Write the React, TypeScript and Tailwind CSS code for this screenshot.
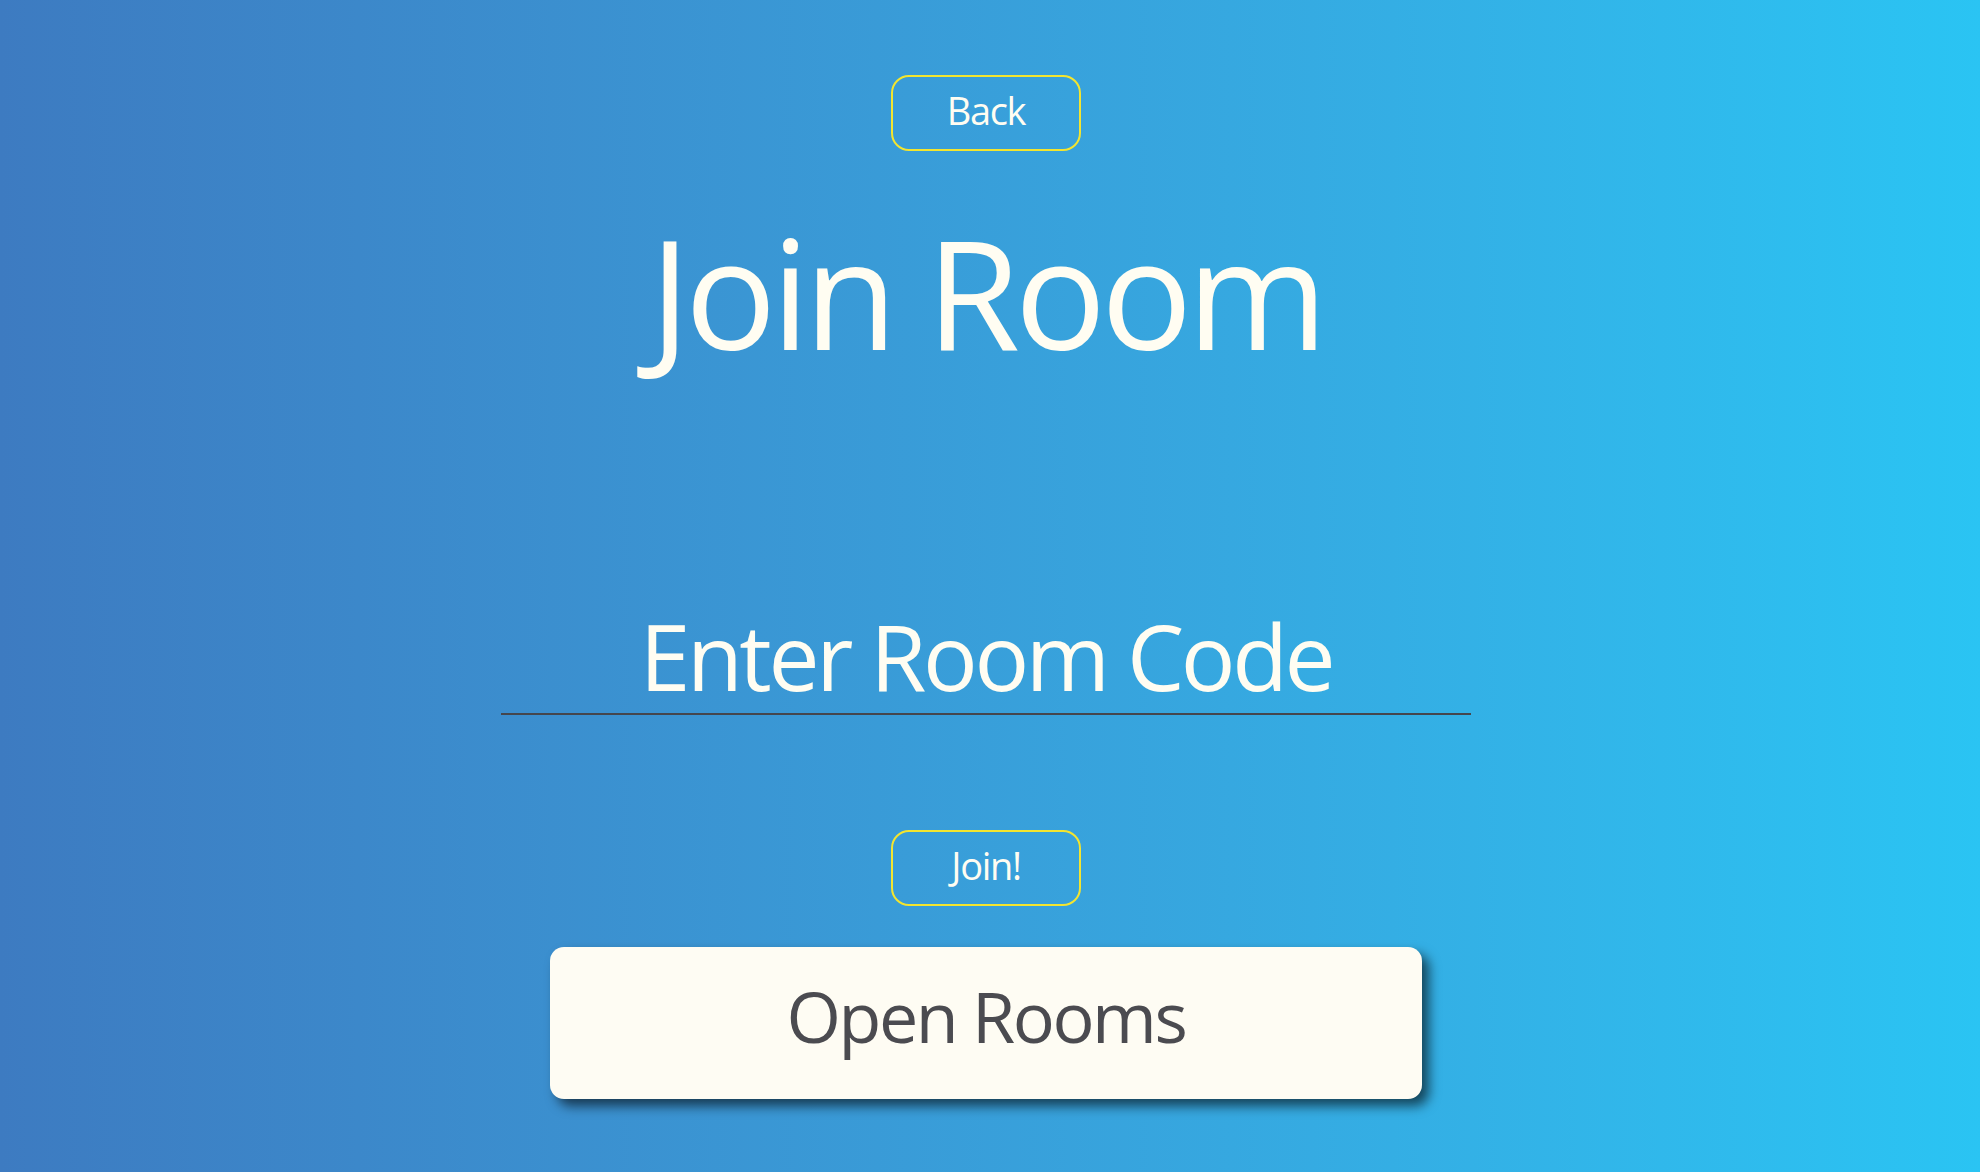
import React from "react";

const font = { fontFamily: '"Open Sans", "Noto Sans", sans-serif' };

function OutlineButton({ label }: { label: string }) {
  return (
    <button className="flex h-[76px] w-[190px] items-center justify-center rounded-[18px] border-2 border-[#f3e52f] pb-[6px] text-[38px] leading-none tracking-[-0.035em] text-[#fffdf2]">
      {label}
    </button>
  );
}

export default function App() {
  return (
    <div
      className="flex min-h-screen w-full flex-col items-center bg-gradient-to-r from-[#3d7bc1] to-[#2ac4f3] pr-[8px] pt-[75px]"
      style={font}
    >
      <OutlineButton label="Back" />

      <h1 className="mt-[65px] text-[152px] font-normal leading-none tracking-[-0.035em] text-[#fffdf2]">
        Join Room
      </h1>

      <input
        type="text"
        placeholder="Enter Room Code"
        className="mt-[242px] h-[105px] w-[970px] border-b-2 border-[#45464d] bg-transparent pb-[12px] text-center text-[91px] leading-none tracking-[-0.037em] text-[#fffdf2] outline-none placeholder:text-[#fffdf2]"
      />

      <div className="mt-[115px]">
        <OutlineButton label="Join!" />
      </div>

      <div className="mt-[41px] flex h-[152px] w-[872px] items-center justify-center rounded-[14px] bg-[#fefcf3] pb-[14px] shadow-[7px_7px_12px_rgba(0,0,0,0.6)]">
        <span className="text-[70px] leading-none tracking-[-0.035em] text-[#4b4b50]">
          Open Rooms
        </span>
      </div>
    </div>
  );
}
